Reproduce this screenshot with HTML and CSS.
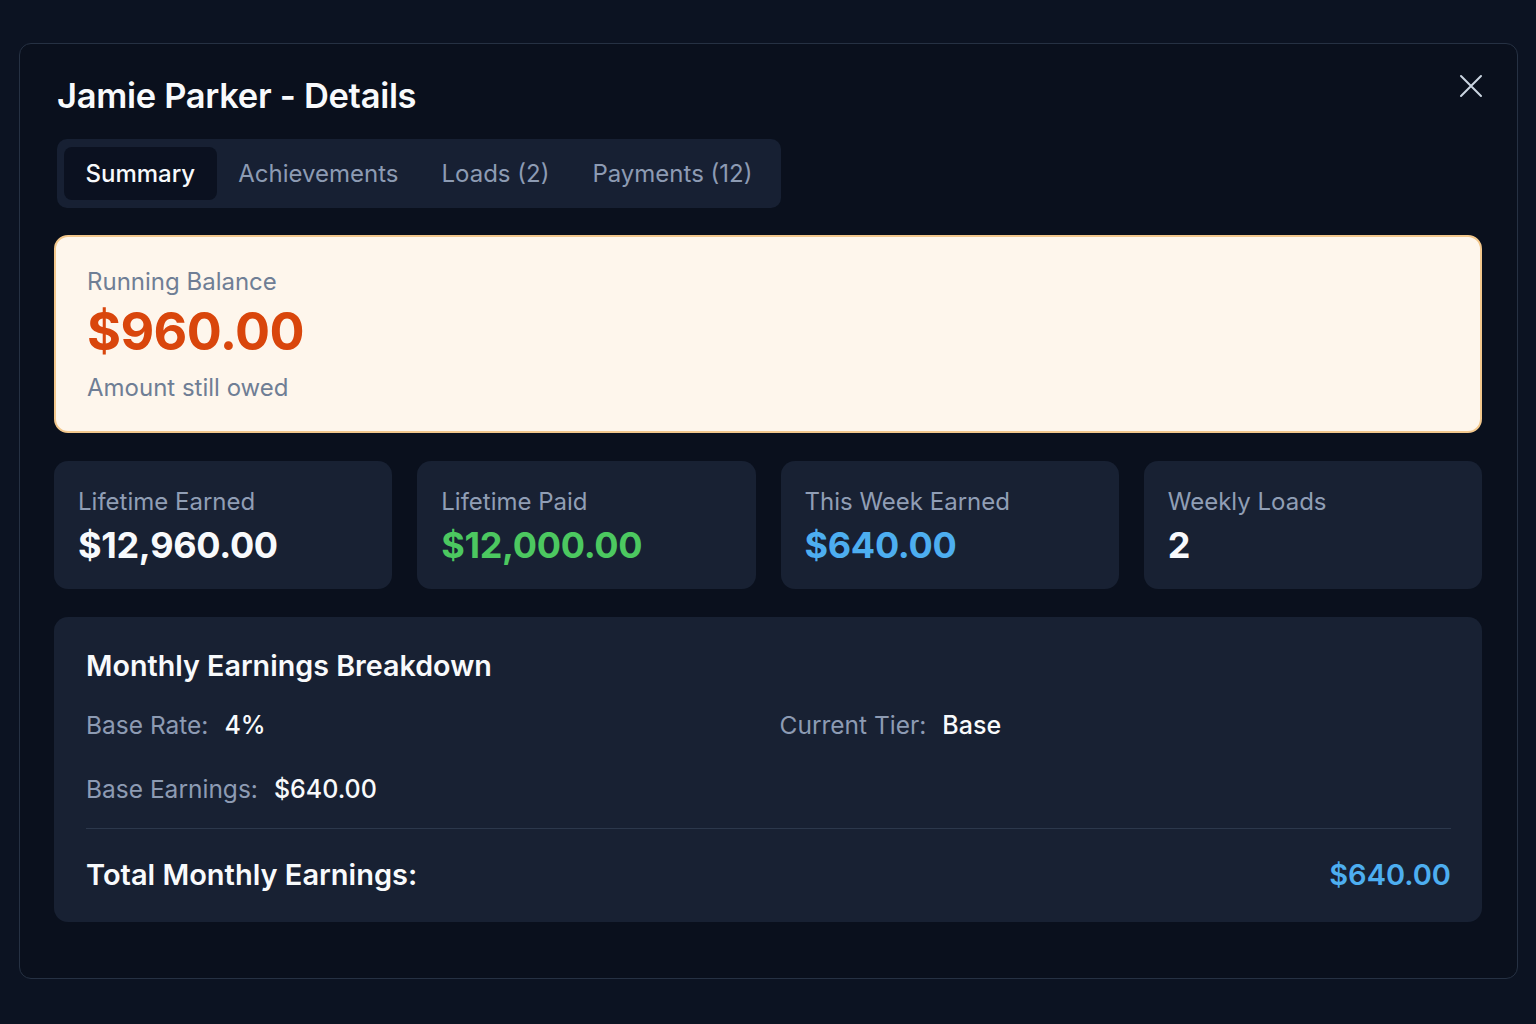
FILE: index.html
```html
<!DOCTYPE html>
<html lang="en">
<head>
<meta charset="utf-8">
<title>Jamie Parker - Details</title>
<link rel="stylesheet" href="styles.css">
</head>
<body>
<div class="modal">
  <header class="modal-header">
    <h1 class="modal-title">Jamie Parker - Details</h1>
    <button class="close-btn" aria-label="Close">
      <svg width="24" height="24" viewBox="0 0 24 24" fill="none" stroke="currentColor" stroke-width="2" stroke-linecap="round"><path d="M2 2 L22 22 M22 2 L2 22"/></svg>
    </button>
  </header>

  <nav class="tabs">
    <button class="tab active">Summary</button>
    <button class="tab">Achievements</button>
    <button class="tab">Loads (2)</button>
    <button class="tab">Payments (12)</button>
  </nav>

  <section class="balance-card">
    <div class="balance-label">Running Balance</div>
    <div class="balance-value">$960.00</div>
    <div class="balance-sub">Amount still owed</div>
  </section>

  <section class="stats">
    <div class="stat-card">
      <div class="stat-label">Lifetime Earned</div>
      <div class="stat-value">$12,960.00</div>
    </div>
    <div class="stat-card">
      <div class="stat-label">Lifetime Paid</div>
      <div class="stat-value green">$12,000.00</div>
    </div>
    <div class="stat-card">
      <div class="stat-label">This Week Earned</div>
      <div class="stat-value blue">$640.00</div>
    </div>
    <div class="stat-card">
      <div class="stat-label">Weekly Loads</div>
      <div class="stat-value">2</div>
    </div>
  </section>

  <section class="breakdown">
    <h2 class="breakdown-title">Monthly Earnings Breakdown</h2>
    <div class="breakdown-grid">
      <div class="row"><span class="row-label">Base Rate:</span><span class="row-value">4%</span></div>
      <div class="row"><span class="row-label">Current Tier:</span><span class="row-value">Base</span></div>
      <div class="row"><span class="row-label">Base Earnings:</span><span class="row-value">$640.00</span></div>
    </div>
    <div class="divider"></div>
    <div class="total">
      <span class="total-label">Total Monthly Earnings:</span>
      <span class="total-value">$640.00</span>
    </div>
  </section>
</div>
</body>
</html>
```

FILE: styles.css
```css
* { box-sizing: border-box; }

html, body {
  margin: 0;
  padding: 0;
}

body {
  background: #0c1322;
  font-family: Inter, "Noto Sans", sans-serif;
  color: #f1f5f9;
  width: 1536px;
  height: 1024px;
  overflow: hidden;
  padding: 43px 18px 0 19px;
}

.modal {
  width: 1499px;
  height: 936px;
  background: #0a101d;
  border: 1px solid #263143;
  border-radius: 12px;
  padding: 32px 35px 0 34px;
}

.modal-header {
  display: flex;
  justify-content: space-between;
  align-items: flex-start;
}

.modal-title {
  margin: 0 0 0 3px;
  font-size: 34.5px;
  line-height: 40px;
  font-weight: 600;
  letter-spacing: -0.3px;
  color: #f8fafc;
}

.close-btn {
  background: none;
  border: 0;
  padding: 0;
  margin: -2px -1px 0 0;
  color: #cbd5e1;
  width: 24px;
  height: 24px;
  display: flex;
}

.tabs {
  margin: 23px 0 0 3px;
  display: inline-flex;
  background: #172033;
  border-radius: 10px;
  padding: 8px 7px 8px 7px;
  height: 69px;
}

.tab {
  font-family: inherit;
  background: none;
  border: 0;
  color: #8d9bb3;
  font-size: 24px;
  padding: 0 21.5px;
  border-radius: 8px;
  height: 53px;
}

.tab.active {
  background: #0b1120;
  color: #f8fafc;
  font-weight: 500;
}

.balance-card {
  margin-top: 27px;
  height: 198px;
  background: #fef6ec;
  border: 2px solid #f3c88d;
  border-radius: 14px;
  padding: 30px 31px 0 31px;
}

.balance-label, .balance-sub {
  font-size: 24px;
  line-height: 30px;
  color: #6f7e95;
}

.balance-value {
  margin-top: 5px;
  font-size: 52px;
  line-height: 60px;
  font-weight: 700;
  color: #d9460c;
  letter-spacing: -0.6px;
}

.balance-sub {
  margin-top: 11px;
}

.stats {
  margin-top: 28px;
  display: grid;
  grid-template-columns: repeat(4, 1fr);
  gap: 25px;
}

.stat-card {
  background: #182133;
  border-radius: 14px;
  height: 128px;
  padding: 25px 24px 0 24px;
}

.stat-label {
  font-size: 24px;
  line-height: 32px;
  color: #909eb5;
}

.stat-value {
  margin-top: 5px;
  font-size: 36px;
  line-height: 44px;
  font-weight: 700;
  color: #f8fafc;
  letter-spacing: -0.3px;
}

.stat-value.green { color: #4cc860; }
.stat-value.blue { color: #4daef0; }

.breakdown {
  margin-top: 28px;
  height: 305px;
  background: #182133;
  border-radius: 14px;
  padding: 31px 31px 0 32px;
}

.breakdown-title {
  margin: 0;
  font-size: 28.7px;
  line-height: 36px;
  font-weight: 600;
  color: #f8fafc;
}

.breakdown-grid {
  margin-top: 25px;
  display: grid;
  grid-template-columns: 1fr 1fr;
  column-gap: 22px;
  row-gap: 32px;
}

.row {
  font-size: 24.5px;
  line-height: 32px;
}

.row-label {
  color: #8d9bb3;
  margin-right: 16px;
}

.row-value {
  color: #f8fafc;
  font-weight: 500;
  font-size: 25px;
}

.divider {
  margin-top: 23px;
  height: 1px;
  background: #2c384c;
}

.total {
  margin-top: 28px;
  display: flex;
  justify-content: space-between;
  font-size: 29px;
  line-height: 36px;
  font-weight: 600;
}

.total-label { color: #f8fafc; }
.total-value { color: #4daef0; }
```
